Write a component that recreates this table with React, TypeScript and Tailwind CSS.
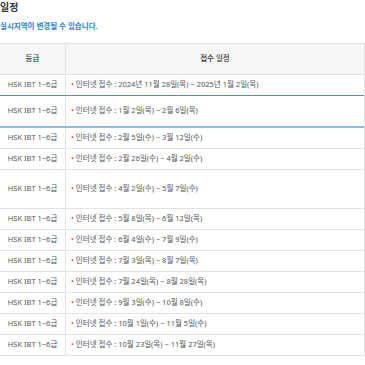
const ROWS: { period: string; h: string; border: string }[] = [
  { period: "2024년 11월 28일(목) ~ 2025년 1월 2일(목)", h: "h-[21px]", border: "border-b border-b-[#4a90d9]" },
  { period: "1월 2일(목) ~ 2월 6일(목)", h: "h-[32px]", border: "border-b-2 border-b-[#8dbbe8]" },
  { period: "2월 5일(수) ~ 3월 12일(수)", h: "h-[21px]", border: "border-b border-b-[#e2e2e2]" },
  { period: "2월 26일(수) ~ 4월 2일(수)", h: "h-[21px]", border: "border-b border-b-[#e2e2e2]" },
  { period: "4월 2일(수) ~ 5월 7일(수)", h: "h-[39px]", border: "border-b border-b-[#e2e2e2]" },
  { period: "5월 8일(목) ~ 6월 12일(목)", h: "h-[21px]", border: "border-b border-b-[#e2e2e2]" },
  { period: "6월 4일(수) ~ 7월 9일(수)", h: "h-[21px]", border: "border-b border-b-[#e2e2e2]" },
  { period: "7월 3일(목) ~ 8월 7일(목)", h: "h-[21px]", border: "border-b border-b-[#e2e2e2]" },
  { period: "7월 24일(목) ~ 8월 28일(목)", h: "h-[21px]", border: "border-b border-b-[#e2e2e2]" },
  { period: "9월 3일(수) ~ 10월 8일(수)", h: "h-[21px]", border: "border-b border-b-[#e2e2e2]" },
  { period: "10월 1일(수) ~ 11월 5일(수)", h: "h-[21px]", border: "border-b border-b-[#e2e2e2]" },
  { period: "10월 23일(목) ~ 11월 27일(목)", h: "h-[21px]", border: "border-b border-b-[#e2e2e2]" },
];

export default function App() {
  return (
    <div
      className="w-[365px] h-[365px] overflow-hidden bg-white"
      style={{ fontFamily: '"Noto Sans", "Noto Sans CJK KR", sans-serif' }}
    >
      {/* heading */}
      <div className="h-[43px] pt-[1px]">
        <h2 className="text-[10px] leading-[12px] font-bold text-[#333]">일정</h2>
        <p className="mt-[9px] text-[7.5px] leading-[9px] font-bold text-[#2a80d6]">
          실시지역이 변경될 수 있습니다.
        </p>
      </div>

      {/* schedule table */}
      <div className="w-[365px] border-t border-[#e2e2e2] border-r text-[7.5px] text-[#555]">
        <div className="flex h-[31px] bg-[#f6f6f6] border-b border-b-[#e2e2e2] text-[#333] font-medium">
          <div className="w-[66px] shrink-0 border-r border-[#e2e2e2] flex items-center justify-center">
            등급
          </div>
          <div className="flex-1 flex items-center justify-center">접수 일정</div>
        </div>

        {ROWS.map((r, i) => (
          <div key={i} className={`flex ${r.h} ${r.border}`}>
            <div className="w-[66px] shrink-0 border-r border-[#e2e2e2] flex items-center justify-center">
              HSK IBT 1~6급
            </div>
            <div className="flex-1 flex items-center pl-[5px]">
              <span className="text-[#e0413f] mr-[2px]">•</span>
              <span>인터넷 접수 : {r.period}</span>
            </div>
          </div>
        ))}
      </div>
    </div>
  );
}
